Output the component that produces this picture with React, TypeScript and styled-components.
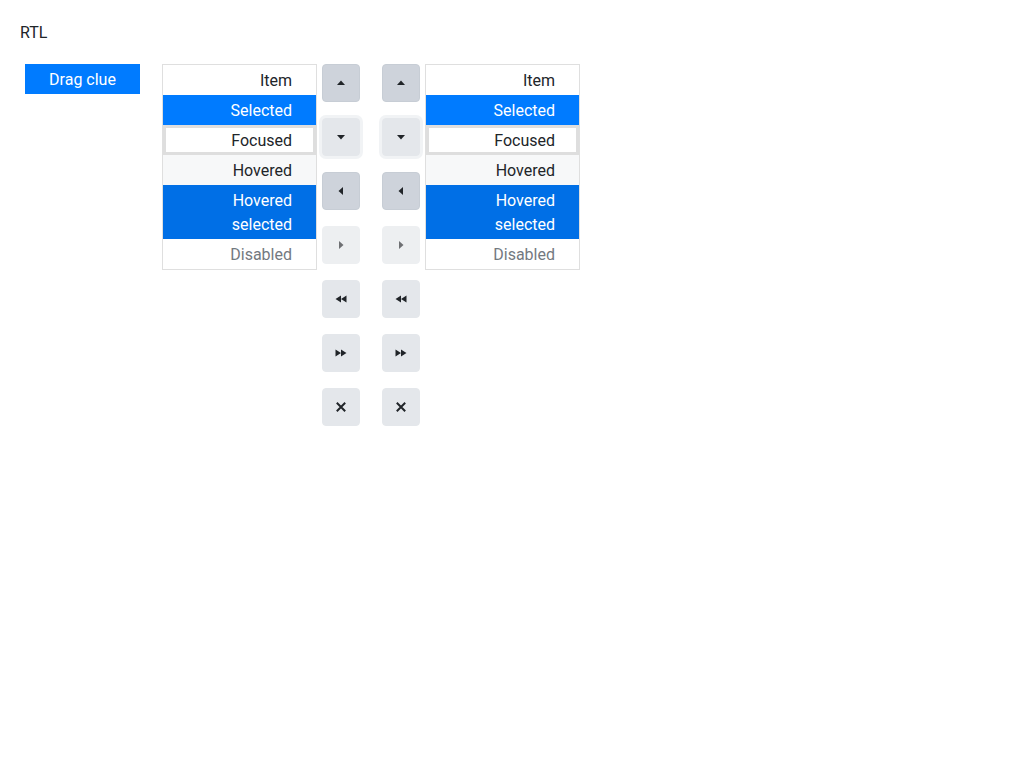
import styled, { createGlobalStyle, css } from 'styled-components';

const GlobalStyle = createGlobalStyle`
  body {
    margin: 0;
    background: #ffffff;
    font-family: Roboto, "Liberation Sans", sans-serif;
    font-size: 16px;
    line-height: 1.5;
    color: #212529;
  }
`;

type ItemState = 'normal' | 'selected' | 'focused' | 'hovered' | 'hoveredSelected' | 'disabled';
type ButtonState = 'normal' | 'hover' | 'focus' | 'disabled';
type IconName = 'up' | 'down' | 'left' | 'right' | 'rewind' | 'forward' | 'x';

const ITEMS: { label: string; state: ItemState }[] = [
  { label: 'Item', state: 'normal' },
  { label: 'Selected', state: 'selected' },
  { label: 'Focused', state: 'focused' },
  { label: 'Hovered', state: 'hovered' },
  { label: 'Hovered selected', state: 'hoveredSelected' },
  { label: 'Disabled', state: 'disabled' },
];

const TOOLS: { icon: IconName; state: ButtonState }[] = [
  { icon: 'up', state: 'hover' },
  { icon: 'down', state: 'focus' },
  { icon: 'left', state: 'hover' },
  { icon: 'right', state: 'disabled' },
  { icon: 'rewind', state: 'normal' },
  { icon: 'forward', state: 'normal' },
  { icon: 'x', state: 'normal' },
];

function Icon({ name }: { name: IconName }) {
  const paths: Record<IconName, JSX.Element> = {
    up: <path d="M8 5.5l4 4.5H4z" />,
    down: <path d="M8 10.5L4 6h8z" />,
    left: <path d="M5.5 8l4.5-4v8z" />,
    right: <path d="M10.5 8L6 4v8z" />,
    rewind: <path d="M2.5 8l5.5-3.5v7zM8 8l5.5-3.5v7z" />,
    forward: <path d="M13.5 8L8 4.5v7zM8 8L2.5 4.5v7z" />,
    x: (
      <path
        d="M3.8 3.8l8.4 8.4M12.2 3.8l-8.4 8.4"
        stroke="currentColor"
        strokeWidth="2"
        fill="none"
      />
    ),
  };
  return (
    <svg width="16" height="16" viewBox="0 0 16 16" fill="currentColor">
      {paths[name]}
    </svg>
  );
}

function ListBox() {
  return (
    <S.List>
      {ITEMS.map(item => (
        <S.Item key={item.label} $state={item.state}>
          {item.label}
        </S.Item>
      ))}
    </S.List>
  );
}

function Toolbar() {
  return (
    <S.Toolbar>
      {TOOLS.map(tool => (
        <S.ToolButton key={tool.icon} $state={tool.state} disabled={tool.state === 'disabled'}>
          <Icon name={tool.icon} />
        </S.ToolButton>
      ))}
    </S.Toolbar>
  );
}

export default function App() {
  return (
    <>
      <GlobalStyle />
      <S.Page>
        <S.Title>RTL</S.Title>
        <S.Row>
          <S.DragClue>Drag clue</S.DragClue>
          <S.Widget>
            <ListBox />
            <Toolbar />
          </S.Widget>
          <S.Widget>
            <Toolbar />
            <ListBox />
          </S.Widget>
        </S.Row>
      </S.Page>
    </>
  );
}

const itemStyles: Record<ItemState, ReturnType<typeof css>> = {
  normal: css``,
  selected: css`
    background: #007bff;
    color: #ffffff;
  `,
  focused: css`
    box-shadow: inset 0 0 0 3px rgba(0, 0, 0, 0.13);
  `,
  hovered: css`
    background: #f7f8f9;
  `,
  hoveredSelected: css`
    background: #006fe6;
    color: #ffffff;
  `,
  disabled: css`
    color: #73797f;
  `,
};

const buttonStyles: Record<ButtonState, ReturnType<typeof css>> = {
  normal: css``,
  hover: css`
    background: #ced3db;
    border-color: #c7cdd5;
  `,
  focus: css`
    box-shadow: 0 0 0 3px rgba(228, 231, 235, 0.5);
  `,
  disabled: css`
    opacity: 0.65;
  `,
};

const S = {
  Page: styled.div`
    padding: 20px;
  `,

  Title: styled.div`
    padding-top: 1px;
    margin-bottom: 19px;
  `,

  Row: styled.div`
    display: flex;
    align-items: flex-start;
  `,

  DragClue: styled.div`
    margin-left: 5px;
    margin-right: 22px;
    width: 115px;
    height: 30px;
    padding-top: 1px;
    box-sizing: border-box;
    line-height: 30px;
    text-align: center;
    background: #007bff;
    color: #ffffff;
  `,

  Widget: styled.div`
    display: flex;
    align-items: flex-start;
    gap: 5px;
    & + & {
      margin-left: 22px;
    }
  `,

  List: styled.div`
    width: 153px;
    border: 1px solid rgba(0, 0, 0, 0.125);
    direction: rtl;
  `,

  Item: styled.div<{ $state: ItemState }>`
    padding: 4px 24px 2px;
    line-height: 24px;
    text-align: right;
    ${p => itemStyles[p.$state]}
  `,

  Toolbar: styled.div`
    display: flex;
    flex-direction: column;
    gap: 16px;
  `,

  ToolButton: styled.button<{ $state: ButtonState }>`
    width: 38px;
    height: 38px;
    padding: 0;
    display: flex;
    align-items: center;
    justify-content: center;
    border: 1px solid #e4e7eb;
    border-radius: 4px;
    background: #e4e7eb;
    color: #212529;
    ${p => buttonStyles[p.$state]}
  `,
};
